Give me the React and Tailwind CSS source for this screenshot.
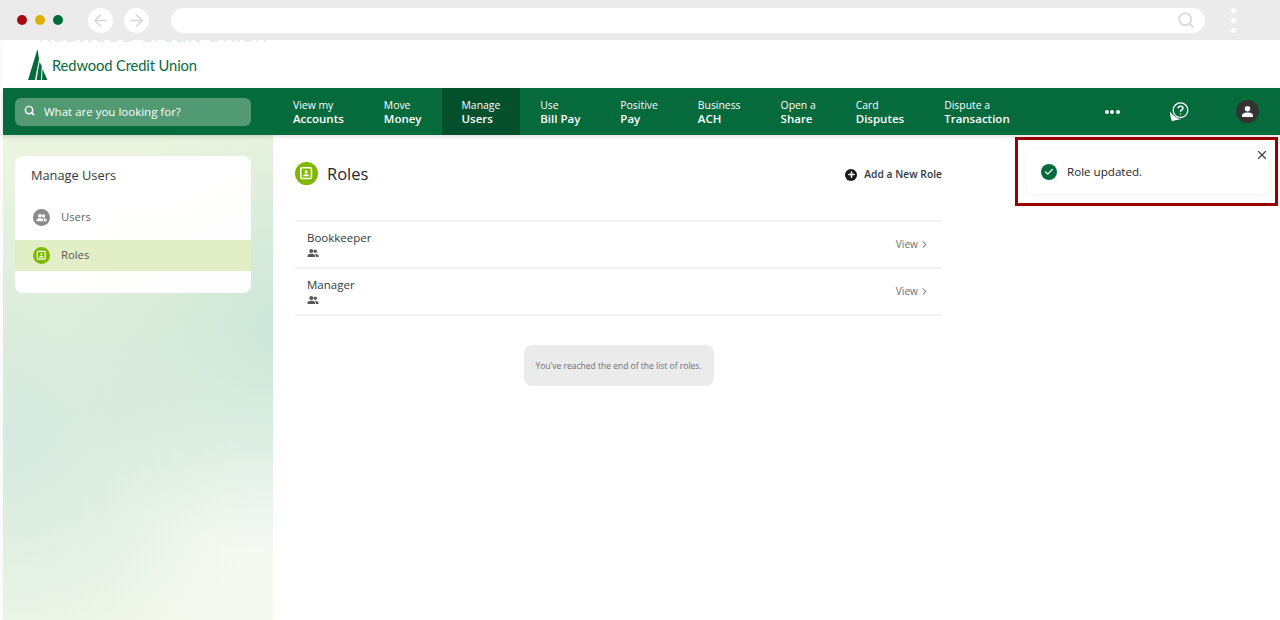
import React from "react";
import { Search, ArrowLeft, ArrowRight, X, Check, Plus, ChevronRight } from "lucide-react";

function UsersGlyph({ className }) {
  return (
    <svg viewBox="0 0 24 24" className={className} fill="currentColor">
      <circle cx="8.500" cy="8" r="4" />
      <circle cx="16.500" cy="8.500" r="3.400" />
      <path d="M1 20v-2.500C1 14.800 5.200 13.500 8.500 13.500S16 14.800 16 17.500V20z" />
      <path d="M17.500 20v-2.500c0-1.500-.7-2.700-1.800-3.600.4 0 .8-.1 1-.1 3 0 6.300 1.200 6.300 3.700V20z" />
    </svg>
  );
}

function RoleIcon({ size }) {
  return (
    <span className={`flex items-center justify-center rounded-full bg-[#7fb800] text-white ${size}`}>
      <svg viewBox="0 0 16 16" className="w-[62%] h-[62%]" fill="none">
        <rect x="2" y="2" width="12" height="12" rx="1.500" stroke="currentColor" strokeWidth="1.800" />
        <circle cx="8" cy="6.600" r="1.700" fill="currentColor" />
        <path d="M4.500 11.500c.3-1.700 1.700-2.300 3.500-2.300s3.200.6 3.500 2.300z" fill="currentColor" />
      </svg>
    </span>
  );
}

function Dot({ c }) {
  return <span className={`w-[10px] h-[10px] rounded-full ${c}`} />;
}

const navItems = [
  ["View my", "Accounts"],
  ["Move", "Money"],
  ["Manage", "Users", true],
  ["Use", "Bill Pay"],
  ["Positive", "Pay"],
  ["Business", "ACH"],
  ["Open a", "Share"],
  ["Card", "Disputes"],
  ["Dispute a", "Transaction"],
];

function RoleRow({ name }) {
  return (
    <div className="flex items-center justify-between h-[47px] border-b-2 border-[#f3f3f3] pl-3 pr-[12px] pb-[2px]">
      <div className="flex flex-col">
        <span className="text-[11.5px] leading-[17px] text-[#33383c]">{name}</span>
        <UsersGlyph className="w-[12px] h-[12px] mt-[1px] text-[#55595c]" />
      </div>
      <span className="flex items-center gap-[1px] pt-[2px] text-[10.2px] text-[#6b6f72]">
        View <ChevronRight className="w-[11px] h-[11px] text-[#444]" strokeWidth={2} />
      </span>
    </div>
  );
}

export default function App() {
  return (
    <div className="relative w-[1280px] h-[620px] overflow-hidden bg-[#fbfbfb] font-['Open_Sans',sans-serif]">
      {/* browser chrome */}
      <div className="h-[40px] bg-[#ebebeb] flex items-center pl-[17px]">
        <div className="flex gap-[8px]">
          <Dot c="bg-[#a80a12]" />
          <Dot c="bg-[#e0b000]" />
          <Dot c="bg-[#056b3e]" />
        </div>
        <div className="flex gap-[11px] ml-[25px]">
          <span className="w-[25px] h-[25px] rounded-full bg-white flex items-center justify-center text-[#d6d6d6]">
            <ArrowLeft className="w-[19px] h-[19px]" strokeWidth={2} />
          </span>
          <span className="w-[25px] h-[25px] rounded-full bg-white flex items-center justify-center text-[#d6d6d6]">
            <ArrowRight className="w-[19px] h-[19px]" strokeWidth={2} />
          </span>
        </div>
        <div className="ml-[22px] w-[1034px] h-[25px] rounded-full bg-white flex items-center justify-end pr-[10px] text-[#dcdcdc]">
          <Search className="w-[18px] h-[18px]" strokeWidth={2.6} />
        </div>
        <div className="ml-[26px] flex flex-col gap-[5px]">
          <span className="w-[5px] h-[5px] rounded-full bg-white" />
          <span className="w-[5px] h-[5px] rounded-full bg-white" />
          <span className="w-[5px] h-[5px] rounded-full bg-white" />
        </div>
      </div>

      {/* page */}
      <div className="ml-[3px] bg-white rounded-tl-[3px]">
        <div className="h-[48px] flex items-center pl-[25px] pt-[2px]">
          <svg viewBox="0 0 20 32" className="w-[20px] h-[32px] text-[#056a3c]" fill="currentColor">
            <path d="M9.500 0 L0 31 H7 L11 10z" />
            <path d="M11.500 13 L8.500 31 H13 L13.700 17z" />
            <path d="M14.500 20 L14 31 H19.500z" />
          </svg>
          <span className="ml-[4px] font-['Lato',sans-serif] text-[14.7px] tracking-[-0.1px] text-[#056a3c]">Redwood Credit Union</span>
        </div>

        <nav className="h-[47px] bg-[#056a3c] flex items-stretch text-white shadow-[0_2px_4px_rgba(0,0,0,0.12)] relative">
          <div className="w-[270px] shrink-0 flex items-center pl-[12px]">
            <div className="w-[236px] h-[28px] rounded-[6px] bg-[#529a73] flex items-center pl-[9px]">
              <Search className="w-[11px] h-[11px] mb-[3px]" strokeWidth={3.2} />
              <span className="ml-[9px] text-[11.5px]">What are you looking for?</span>
            </div>
          </div>
          {navItems.map(([a, b, active]) => (
            <div key={b} className={`px-[20px] pt-[2px] flex flex-col justify-center ${active ? "bg-[#04502d]" : ""}`}>
              <span className="text-[10.4px] leading-[13px]">{a}</span>
              <span className="text-[11.5px] leading-[14px] font-semibold">{b}</span>
            </div>
          ))}
          <div className="flex items-center ml-[75px]">
            <span className="flex gap-[1.500px]">
              <span className="w-[4px] h-[4px] rounded-full bg-white" />
              <span className="w-[4px] h-[4px] rounded-full bg-white" />
              <span className="w-[4px] h-[4px] rounded-full bg-white" />
            </span>
            <svg viewBox="0 0 20 20" className="w-[20px] h-[20px] ml-[49px]" fill="none" stroke="currentColor" strokeWidth="1.300">
              <circle cx="11.500" cy="8.200" r="7.300" />
              <path d="M1 9.500 C1 12.500 1.500 15 3 19.500 C6 18 9 17.500 12.500 17.500 C8 16.500 4 14 1 9.500z" fill="currentColor" stroke="none" />
              <path d="M9 6.300c.2-1.400 1.200-2.100 2.500-2.100s2.400.8 2.400 2c0 1.800-2.400 1.700-2.400 3.600" strokeWidth="1.500" />
              <circle cx="11.500" cy="11.900" r=".7" fill="currentColor" stroke="none" />
            </svg>
            <span className="ml-[47px] w-[23px] h-[23px] rounded-full bg-[#333] flex items-center justify-center">
              <svg viewBox="0 0 12 12" className="w-[13px] h-[13px]" fill="currentColor">
                <circle cx="6" cy="3.400" r="2.500" />
                <path d="M1 11V9.500C1 7.800 3.500 7 6 7s5 .8 5 2.500V11z" />
              </svg>
            </span>
          </div>
        </nav>

        <div className="flex h-[485px]">
          <aside className="w-[270px] shrink-0 pl-[12px] pt-[21px] bg-[radial-gradient(ellipse_at_100%_40%,#cde6d9_0%,transparent_55%),radial-gradient(ellipse_at_0%_62%,#d6eadf_0%,transparent_60%),radial-gradient(ellipse_at_100%_80%,#f6faf4_0%,transparent_45%),linear-gradient(180deg,#ebf4df_0%,#e5f1da_35%,#dfeee0_58%,#edf5e8_80%,#f2f8ea_100%)]">
            <div className="w-[236px] h-[137px] rounded-[8px] bg-white/95 pt-[10px]">
              <h2 className="pl-[16px] text-[12.8px] leading-[18px] text-[#33383c] font-medium">Manage Users</h2>
              <div className="mt-[10px] h-[46px] flex items-center pl-[18px]">
                <span className="w-[17px] h-[17px] rounded-full bg-[#8b8b8b] flex items-center justify-center text-white">
                  <UsersGlyph className="w-[11px] h-[11px]" />
                </span>
                <span className="ml-[11px] text-[11.3px] text-[#666]">Users</span>
              </div>
              <div className="h-[31px] bg-[#e2efc6] flex items-center pl-[18px]">
                <RoleIcon size="w-[17px] h-[17px]" />
                <span className="ml-[11px] text-[11.3px] text-[#555]">Roles</span>
              </div>
            </div>
          </aside>

          <main className="w-[669px] pl-[22px] pt-[27px]">
            <div className="w-[647px] flex items-center justify-between">
              <div className="flex items-center">
                <RoleIcon size="w-[23px] h-[23px]" />
                <h1 className="ml-[9px] text-[16.5px] leading-[22px] font-medium text-[#22262a]">Roles</h1>
              </div>
              <div className="flex items-center pt-[2px]">
                <span className="w-[12px] h-[12px] rounded-full bg-[#16191c] flex items-center justify-center text-white">
                  <Plus className="w-[9px] h-[9px]" strokeWidth={4} />
                </span>
                <span className="ml-[7px] text-[10.3px] font-semibold text-[#33383c]">Add a New Role</span>
              </div>
            </div>
            <div className="w-[647px] mt-[35px] border-t-2 border-[#f3f3f3]">
              <RoleRow name="Bookkeeper" />
              <RoleRow name="Manager" />
            </div>
            <div className="w-[647px] flex justify-center mt-[29px]">
              <div className="w-[190px] h-[41px] pt-[1px] rounded-[8px] bg-[#ebebeb] flex items-center justify-center text-[8.5px] text-[#6b6f72]">
                <span>You've reached the end of the <span className="text-[#55789a]">list</span> of roles.</span>
              </div>
            </div>
          </main>
        </div>
      </div>

      {/* clipped remnant of the scrolled page, over the header's top edge */}
      <div className="absolute left-[38px] top-[40px] h-[2px] overflow-hidden">
        <div className="-mt-[20px] text-[21.800px] leading-[28px] text-[#dcede3] whitespace-nowrap">Redwood Credit Union</div>
      </div>

      {/* toast */}
      <div className="absolute left-[1015px] top-[137px] w-[263px] h-[69px] border-[3px] border-[#990000]">
        <div className="absolute left-[9px] top-[9px] w-[242px] h-[45px] rounded-[6px] bg-white shadow-[0_1px_6px_rgba(0,0,0,0.07)] flex items-center pl-[14px]">
          <span className="w-[16px] h-[16px] rounded-full bg-[#056a3c] flex items-center justify-center text-white">
            <Check className="w-[10px] h-[10px]" strokeWidth={3} />
          </span>
          <span className="ml-[10px] text-[11.6px] font-medium text-[#22262a]">Role updated.</span>
        </div>
        <span className="absolute left-[234px] top-[5px] w-[20px] h-[20px] rounded-full bg-white flex items-center justify-center text-[#444]">
          <X className="w-[14px] h-[14px]" strokeWidth={2} />
        </span>
      </div>
    </div>
  );
}
